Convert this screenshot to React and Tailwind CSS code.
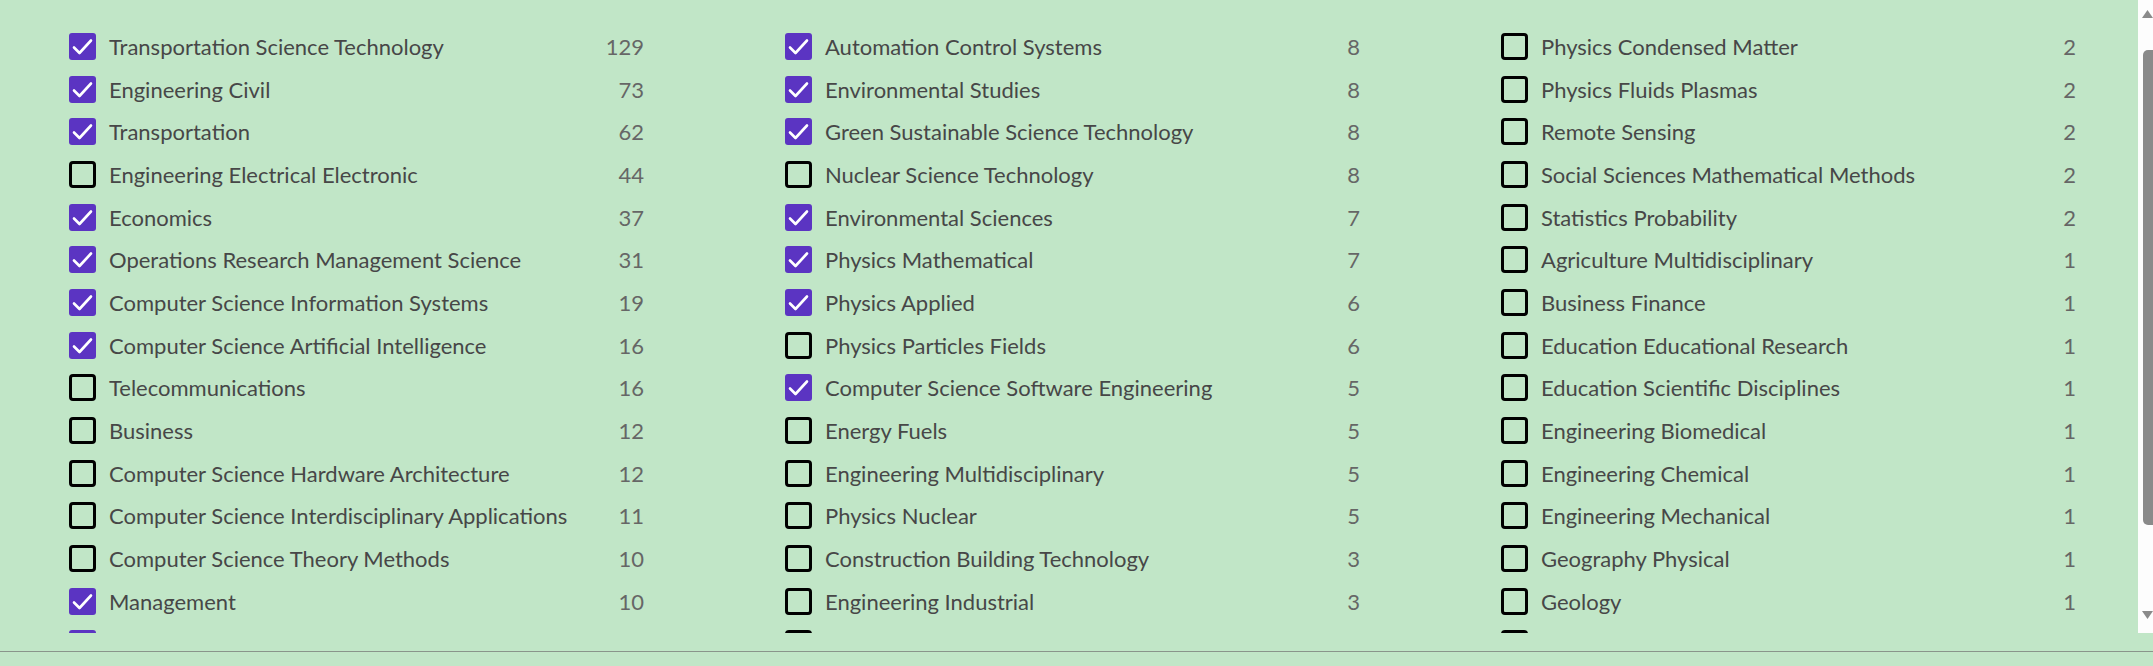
import React from "react";

const columns = [
  [
    ["Transportation Science Technology", 129, true],
    ["Engineering Civil", 73, true],
    ["Transportation", 62, true],
    ["Engineering Electrical Electronic", 44, false],
    ["Economics", 37, true],
    ["Operations Research Management Science", 31, true],
    ["Computer Science Information Systems", 19, true],
    ["Computer Science Artificial Intelligence", 16, true],
    ["Telecommunications", 16, false],
    ["Business", 12, false],
    ["Computer Science Hardware Architecture", 12, false],
    ["Computer Science Interdisciplinary Applications", 11, false],
    ["Computer Science Theory Methods", 10, false],
    ["Management", 10, true],
    ["", null, true],
  ],
  [
    ["Automation Control Systems", 8, true],
    ["Environmental Studies", 8, true],
    ["Green Sustainable Science Technology", 8, true],
    ["Nuclear Science Technology", 8, false],
    ["Environmental Sciences", 7, true],
    ["Physics Mathematical", 7, true],
    ["Physics Applied", 6, true],
    ["Physics Particles Fields", 6, false],
    ["Computer Science Software Engineering", 5, true],
    ["Energy Fuels", 5, false],
    ["Engineering Multidisciplinary", 5, false],
    ["Physics Nuclear", 5, false],
    ["Construction Building Technology", 3, false],
    ["Engineering Industrial", 3, false],
    ["", null, false],
  ],
  [
    ["Physics Condensed Matter", 2, false],
    ["Physics Fluids Plasmas", 2, false],
    ["Remote Sensing", 2, false],
    ["Social Sciences Mathematical Methods", 2, false],
    ["Statistics Probability", 2, false],
    ["Agriculture Multidisciplinary", 1, false],
    ["Business Finance", 1, false],
    ["Education Educational Research", 1, false],
    ["Education Scientific Disciplines", 1, false],
    ["Engineering Biomedical", 1, false],
    ["Engineering Chemical", 1, false],
    ["Engineering Mechanical", 1, false],
    ["Geography Physical", 1, false],
    ["Geology", 1, false],
    ["", null, false],
  ],
];

function Checkbox({ checked }) {
  if (checked) {
    return (
      <span className="w-[27px] h-[27px] shrink-0 rounded-[3px] bg-[#5b34c2] flex items-center justify-center">
        <svg width="27" height="27" viewBox="0 0 27 27" fill="none">
          <path d="M5 14.5 L10.5 20 L22 7.5" stroke="#fff" strokeWidth="2.6" strokeLinecap="round" strokeLinejoin="round" />
        </svg>
      </span>
    );
  }
  return <span className="w-[27px] h-[27px] shrink-0 rounded-[4px] border-[3px] border-black" />;
}

export default function App() {
  return (
    <div className="w-full h-[666px] bg-[#c1e6c7] font-['Lato','Liberation_Sans',sans-serif]">
      <div className="flex h-[633px]">
        <div className="flex-1 overflow-hidden pt-[25px] pl-[69px]">
          <div className="grid grid-cols-[575px_575px_575px] gap-x-[141px]">
            {columns.map((col, ci) => (
              <div key={ci} className="flex flex-col">
                {col.map(([name, count, checked], ri) => (
                  <div key={ri} className="h-[42.7px] flex items-center">
                    <Checkbox checked={checked} />
                    {name && (
                      <span className="ml-[13px] text-[22px] text-[#474747] whitespace-nowrap">
                        {name}
                      </span>
                    )}
                    {count !== null && (
                      <span className="ml-auto text-[22px] text-[#666]">{count}</span>
                    )}
                  </div>
                ))}
              </div>
            ))}
          </div>
        </div>

        {/* scrollbar */}
        <div className="w-[15px] bg-[#fdfdfd] flex flex-col">
          <svg className="mt-[10px] ml-[4px]" width="11" height="8" viewBox="0 0 11 8">
            <path d="M5.5 0 L11 8 L0 8 Z" fill="#8a8a8a" />
          </svg>
          <div className="mt-[32px] ml-[5px] h-[475px] bg-[#8a8a8a] rounded-l-[5px]" />
          <svg className="mt-auto mb-[14px] ml-[4px]" width="11" height="8" viewBox="0 0 11 8">
            <path d="M0 0 L11 0 L5.5 8 Z" fill="#8a8a8a" />
          </svg>
        </div>
      </div>
      <div className="mt-[18px] border-t border-[#8a958b]" />
    </div>
  );
}
